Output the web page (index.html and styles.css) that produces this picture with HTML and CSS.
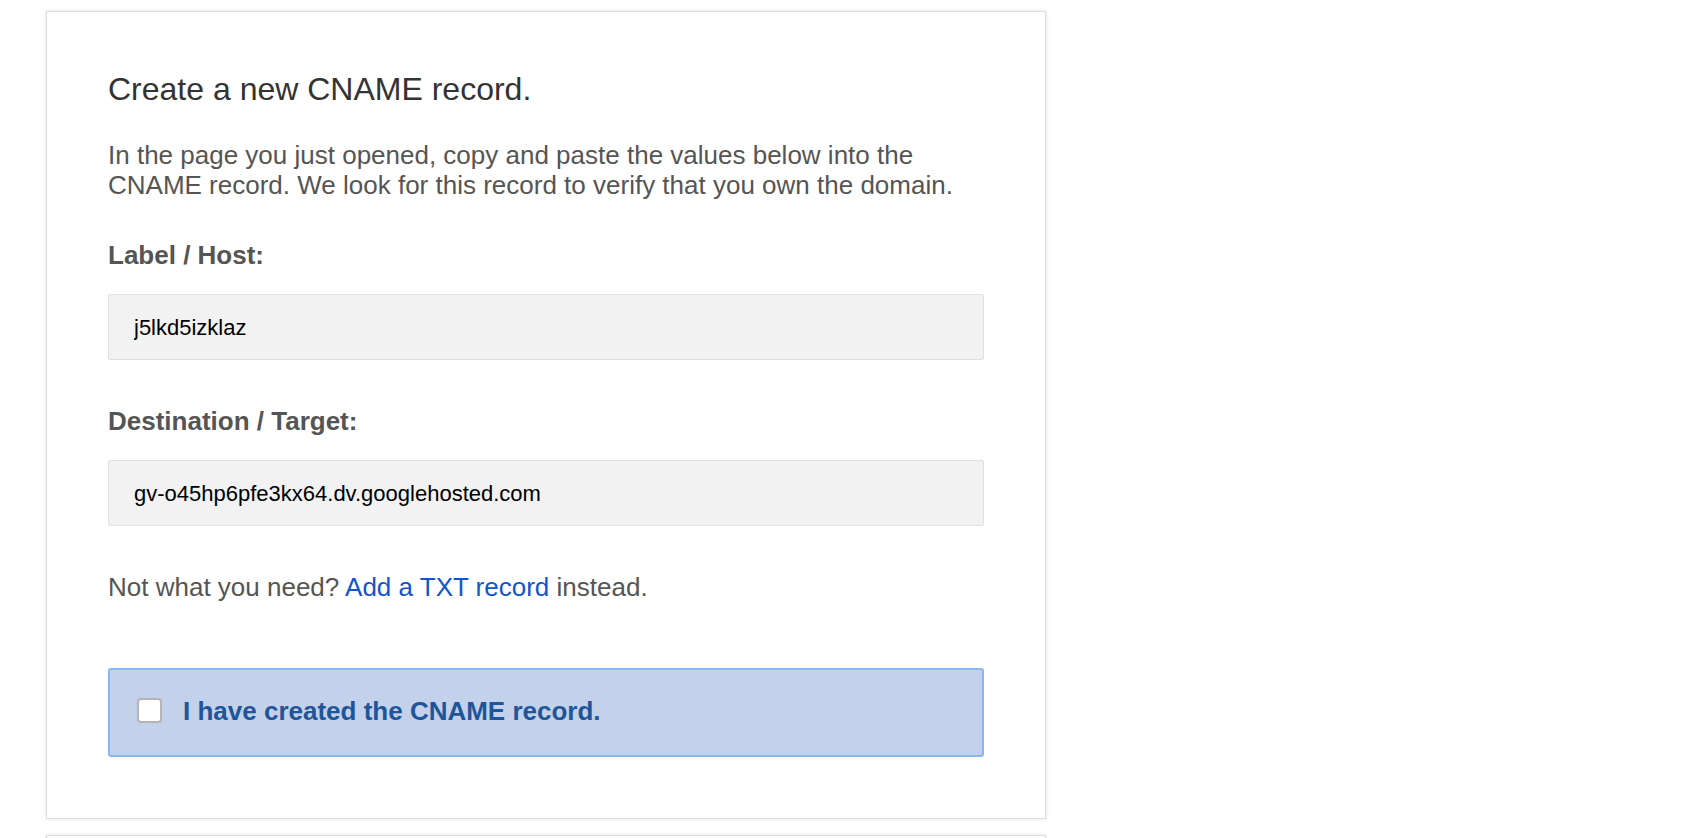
FILE: index.html
```html
<!DOCTYPE html>
<html lang="en">
<head>
  <meta charset="UTF-8">
  <title>Verify your domain</title>
  <meta name="viewport" content="width=device-width, initial-scale=1.0">
  <link rel="stylesheet" href="styles.css">
</head>
<body>

  <div class="card">
    <h1>Create a new CNAME record.</h1>

    <p class="intro">
      In the page you just opened, copy and paste the values below into the
      CNAME record. We look for this record to verify that you own the domain.
    </p>

    <label for="host">Label / Host:</label>
    <input type="text" id="host" value="j5lkd5izklaz" readonly>

    <label for="target">Destination / Target:</label>
    <input type="text" id="target" value="gv-o45hp6pfe3kx64.dv.googlehosted.com" readonly>

    <p class="alt">
      Not what you need? <a href="#">Add a TXT record</a> instead.
    </p>

    <div class="confirm">
      <input type="checkbox" id="done">
      <label for="done">I have created the CNAME record.</label>
    </div>
  </div>

  <div class="card next"></div>

</body>
</html>
```

FILE: styles.css
```css
body {
  margin: 0;
  background: #fff;
  font-family: "Liberation Sans", Arial, sans-serif;
  padding: 11px 0 0 46px;
}

.card {
  width: 876px;
  padding: 10px 61px 61px;
  background: #fff;
  border: 1px solid #dcdcd8;
  box-shadow: 0 0 4px rgba(0,0,0,0.12);
}

.card.next {
  margin-top: 16px;
  height: 40px;
  padding: 0 61px;
}

.card h1 {
  font-size: 32px;
  font-weight: normal;
  color: #333;
  margin: 47px 0 0;
  line-height: 40px;
}

.intro {
  font-size: 26px;
  line-height: 30px;
  color: #555;
  margin: 31px 0 0;
}

label {
  display: block;
  font-size: 26px;
  font-weight: bold;
  line-height: 30px;
  color: #555;
  margin: 40px 0 24px;
}

input[type="text"] {
  display: block;
  box-sizing: border-box;
  width: 100%;
  height: 66px;
  padding: 2px 25px 0;
  font-family: "Liberation Sans", Arial, sans-serif;
  font-size: 22px;
  color: #000;
  background: #f2f2f2;
  border: 1px solid #e0e0e0;
  border-radius: 2px;
  outline: none;
}

input[type="text"] + label {
  margin-top: 46px;
}

.alt {
  font-size: 26px;
  line-height: 30px;
  color: #555;
  margin: 46px 0 0;
}

.alt a {
  color: #1155cc;
  text-decoration: none;
}

.confirm {
  display: flex;
  align-items: center;
  gap: 21px;
  height: 85px;
  margin-top: 66px;
  padding: 0 27px;
  background: #c3d1ea;
  border: 2px solid #8ab8ec;
  border-radius: 3px;
}

.confirm input {
  appearance: none;
  width: 25px;
  height: 25px;
  margin: 0 0 5px;
  background: #fff;
  border: 2px solid #b4b4b4;
  border-radius: 4px;
}

.confirm label {
  margin: 0 0 3px;
  color: #1f5599;
}
```
